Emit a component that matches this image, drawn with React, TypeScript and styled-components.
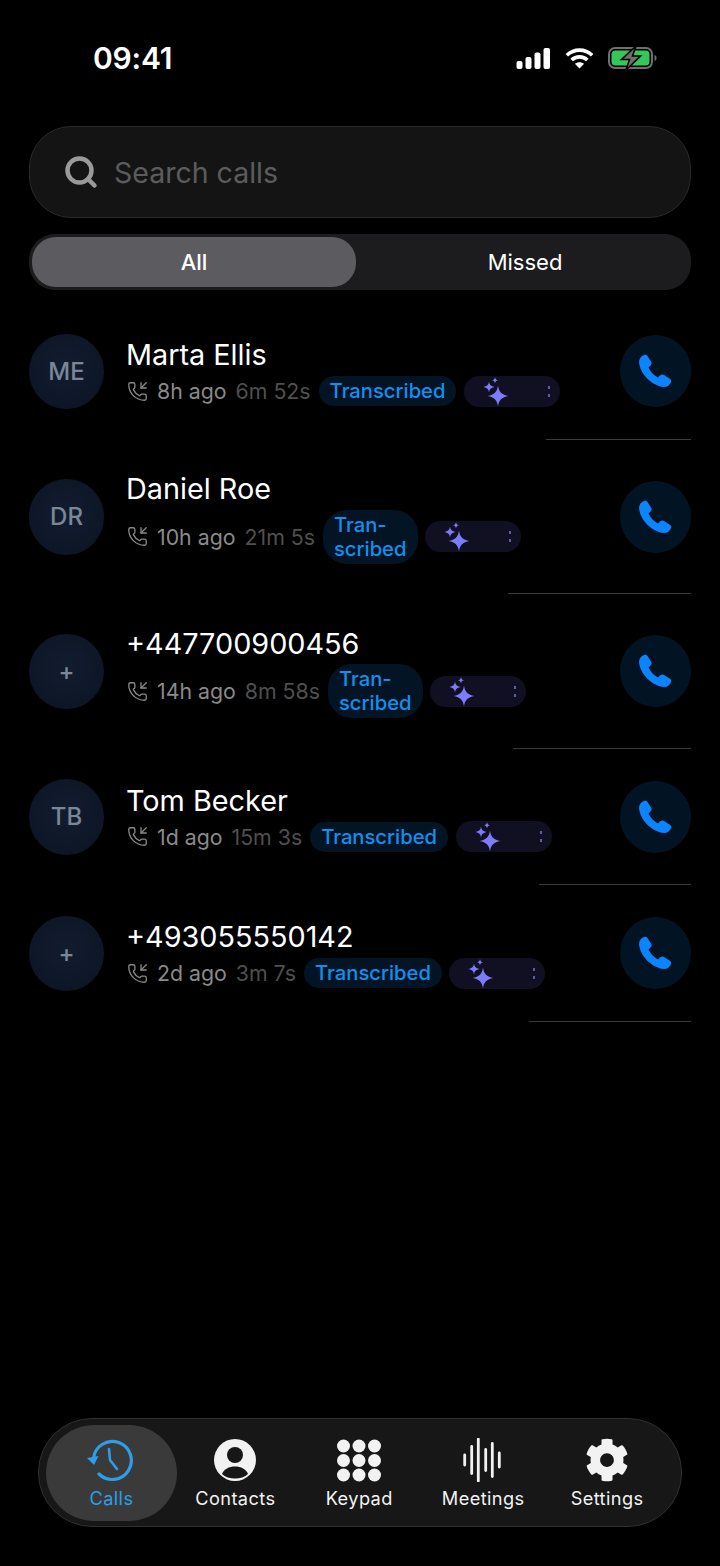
import React from 'react'
import styled, { createGlobalStyle } from 'styled-components'
import { PhoneIncoming, Search } from 'lucide-react'
import { FaCog } from 'react-icons/fa'

const GlobalStyle = createGlobalStyle`
  html, body {
    margin: 0;
    padding: 0;
    background: #000;
  }
  * {
    box-sizing: border-box;
  }
`

const Screen = styled.div`
  width: 720px;
  height: 1566px;
  background: #000;
  color: #fff;
  font-family: Inter, "Liberation Sans", sans-serif;
  display: flex;
  flex-direction: column;
  overflow: hidden;
`

const StatusBar = styled.div`
  height: 116px;
  padding: 0 63px 0 93px;
  display: flex;
  align-items: center;
  justify-content: space-between;
`

const Clock = styled.div`
  font-size: 30px;
  font-weight: 600;
  letter-spacing: -0.2px;
`

const StatusIcons = styled.div`
  display: flex;
  align-items: center;
  gap: 14px;
`

const Content = styled.div`
  padding: 10px 29px 0;
  flex: 1;
  display: flex;
  flex-direction: column;
`

const SearchBox = styled.div`
  height: 92px;
  border-radius: 42px;
  background: #141415;
  border: 1.5px solid #2a2a2b;
  display: flex;
  align-items: center;
  gap: 15px;
  padding-left: 33px;
  color: #9a9a9a;
`

const SearchText = styled.div`
  font-size: 28.5px;
  color: #5c5c5c;
`

const Segments = styled.div`
  margin-top: 16px;
  height: 56px;
  padding: 3px;
  border-radius: 26px;
  background: #1c1c1e;
  display: flex;
  gap: 6px;
`

const Segment = styled.div<{ $active?: boolean }>`
  width: ${p => (p.$active ? '324px' : 'auto')};
  flex: ${p => (p.$active ? '0 0 auto' : '1')};
  border-radius: 24px;
  background: ${p => (p.$active ? '#5c5c60' : 'transparent')};
  display: flex;
  align-items: center;
  justify-content: center;
  font-size: 22px;
  font-weight: ${p => (p.$active ? 500 : 400)};
`

const CallList = styled.div`
  margin-top: 13px;
`

const Row = styled.div`
  padding: 30.5px 0 29.5px;
  display: flex;
  align-items: center;
  gap: 22px;
`

const Avatar = styled.div`
  flex: 0 0 auto;
  width: 75px;
  height: 75.5px;
  border-radius: 50%;
  background: radial-gradient(circle at 50% 45%, #121c30, #0c1422);
  color: #7b8797;
  font-size: 24px;
  font-weight: 500;
  display: flex;
  align-items: center;
  justify-content: center;
`

const CallInfo = styled.div`
  flex: 1;
  display: flex;
  flex-direction: column;
  min-width: 0;
`

const Name = styled.div`
  padding-top: 1px;
  font-size: 28.8px;
  line-height: 36px;
  font-weight: 400;
`

const Meta = styled.div`
  margin-top: 2.5px;
  padding-left: 1px;
  display: flex;
  align-items: center;
  color: #8a8a8a;
`

const When = styled.span`
  margin-left: 9px;
  font-size: 21.3px;
  white-space: nowrap;
`

const Duration = styled.span`
  margin-left: 9px;
  font-size: 21.3px;
  color: #4f4f4f;
  white-space: nowrap;
`

const TranscribedChip = styled.div`
  margin-left: 8px;
  padding: 3px 11px;
  border-radius: 16px;
  background: #031524;
  color: #1290ee;
  font-size: 20.2px;
  line-height: 24px;
  font-weight: 500;
  white-space: nowrap;
`

const WrappedChip = styled(TranscribedChip)`
  border-radius: 24px;
  width: 95px;
`

const AiChip = styled.div`
  position: relative;
  margin-left: 7.5px;
  width: 96px;
  height: 31px;
  border-radius: 15.5px;
  background: #110f22;
  display: flex;
  align-items: center;
  padding-left: 15px;
`

const AiDots = styled.div`
  position: absolute;
  right: 10px;
  top: 10px;
  width: 2px;
  height: 11px;
  border-top: 3px solid #5e5ca8;
  border-bottom: 3px solid #5e5ca8;
`

const CallButton = styled.div`
  flex: 0 0 auto;
  width: 71.5px;
  height: 72px;
  border-radius: 50%;
  background: #021423;
  color: #0a84ff;
  display: flex;
  align-items: center;
  justify-content: center;
`

const Divider = styled.div<{ $inset: number }>`
  height: 1px;
  margin-left: ${p => p.$inset}px;
  background: #3a3a3c;
`

const TabBar = styled.nav`
  margin: 0 38px 39px;
  height: 109px;
  border-radius: 54px;
  background: #171717;
  border: 1.5px solid #303030;
  padding: 5.5px 12px 5.5px 10.5px;
  display: flex;
`

const Tab = styled.div<{ $active?: boolean }>`
  width: ${p => (p.$active ? '132px' : '124px')};
  margin: ${p => (p.$active ? '0 -4px' : '0')};
  border-radius: 48px;
  background: ${p => (p.$active ? '#3a3a3a' : 'transparent')};
  color: ${p => (p.$active ? '#2b9fea' : '#f2f2f2')};
  display: flex;
  flex-direction: column;
  align-items: center;
  padding-top: 13px;
`

const TabIcon = styled.div`
  height: 44px;
  display: flex;
  align-items: center;
  justify-content: center;
`

const TabLabel = styled.div`
  margin-top: 4px;
  font-size: 18.2px;
  line-height: 24px;
  font-weight: 400;
  letter-spacing: 0.4px;
`

const SignalIcon = () => (
  <svg width="35" height="21" viewBox="0 0 35 21" fill="#fff">
    <rect x="0.5" y="13" width="6" height="8" rx="2" />
    <rect x="9.5" y="9" width="6" height="12" rx="2" />
    <rect x="18.5" y="4.5" width="6" height="16.5" rx="2" />
    <rect x="27.5" y="0" width="6.5" height="21" rx="2" />
  </svg>
)

const WifiIcon = () => (
  <svg width="29" height="21" viewBox="0 0 29 21" fill="none" stroke="#fff" strokeWidth="3.6">
    <path d="M1.8 7.200C9 0.400 20 0.400 27.200 7.200" />
    <path d="M6.600 12C11 7.800 18 7.800 22.400 12" />
    <path d="M14.500 20.600L9.900 15.800C12.400 13.600 16.600 13.600 19.100 15.800Z" fill="#fff" stroke="none" />
  </svg>
)

const BatteryIcon = () => (
  <svg width="49" height="24" viewBox="0 0 49 24">
    <rect x="1" y="2" width="43" height="20" rx="6" fill="none" stroke="#6f6f6f" strokeWidth="2" />
    <rect x="3.500" y="4.500" width="38" height="15" rx="4" fill="#35c759" />
    <path d="M46.500 9c1.600.5 2 1.700 2 3s-.4 2.500-2 3z" fill="#6f6f6f" />
    <path d="M28 0L13.500 13.500h8L18 24 32.500 10h-8z" fill="#6f6f6f" stroke="#000" strokeWidth="1.600" />
  </svg>
)

const Sparkles = () => (
  <svg width="30" height="31" viewBox="0 0 30 31" fill="#7c7cf8">
    <path d="M19 9.500c.9 6.300 3.700 9.300 10.500 10.500-6.800 1.200-9.600 4.200-10.500 10.500-.9-6.300-3.700-9.300-10.500-10.500 6.800-1.200 9.600-4.200 10.500-10.500z" />
    <path d="M10 5.500c.4 3.300 1.900 4.900 5.500 5.500-3.600.6-5.100 2.200-5.500 5.500-.4-3.300-1.900-4.900-5.500-5.500 3.600-.6 5.100-2.200 5.500-5.500z" />
    <path d="M16 1c.2 2 1.200 3 3.300 3.300-2.100.3-3.100 1.300-3.300 3.300-.2-2-1.200-3-3.300-3.300 2.100-.3 3.100-1.300 3.300-3.300z" />
  </svg>
)

const PhoneGlyph = () => (
  <svg width="34" height="34" viewBox="0 0 34 34" fill="currentColor">
    <path d="M6 1C3 2 1 5 1 8c1 12 13 24 25 25 3 0 6-2 7-5 .5-1.500 0-2.500-1.500-3.500L26 21c-1.500-1-3-.5-4 .5l-2 2c-4.500-2.500-7.500-5.500-9.500-10l2-2c1-1 1.500-2.500.5-4L9.500 2C8.500.5 7.500.5 6 1z" />
  </svg>
)

const HistoryIcon = () => (
  <svg width="48" height="44" viewBox="0 0 48 44" fill="none" stroke="currentColor" strokeWidth="3.200" strokeLinecap="round" strokeLinejoin="round">
    <path d="M6.500 20A19 19 0 1 1 12 36" />
    <path d="M22 11l1 11 7 9" strokeWidth="2.600" />
    <path d="M0 20L11.500 18L7 27Z" fill="currentColor" stroke="none" />
  </svg>
)

const ContactIcon = () => (
  <svg width="44" height="44" viewBox="0 0 44 44">
    <circle cx="22" cy="22" r="21" fill="#f2f2f2" />
    <circle cx="22" cy="17" r="8" fill="#171717" />
    <path d="M9 36c2-5 7-7.500 13-7.500S33 31 35 36c-3 3-8 4.500-13 4.500S12 39 9 36z" fill="#171717" />
  </svg>
)

const KeypadIcon = () => (
  <svg width="46" height="44" viewBox="0 0 46 44" fill="currentColor">
    {[8, 22.500, 37].map(y =>
      [7.500, 23, 38.500].map(x => <circle key={`${x}-${y}`} cx={x} cy={y} r="6.500" />)
    )}
  </svg>
)

const WaveIcon = () => (
  <svg width="40" height="44" viewBox="0 0 40 44" stroke="currentColor" strokeWidth="2.800" strokeLinecap="round">
    <path d="M1.700 17v10M8.700 8.500v27M15.300 1v42M22.700 11.500v21M29.300 5.500v33M36.300 15v14" />
  </svg>
)

interface Call {
  initials: string
  name: string
  when: string
  duration: string
  wrapped?: boolean
  inset: number
}

const calls: Call[] = [
  { initials: 'ME', name: 'Marta Ellis', when: '8h ago', duration: '6m 52s', inset: 517 },
  { initials: 'DR', name: 'Daniel Roe', when: '10h ago', duration: '21m 5s', wrapped: true, inset: 479 },
  { initials: '+', name: '+447700900456', when: '14h ago', duration: '8m 58s', wrapped: true, inset: 484 },
  { initials: 'TB', name: 'Tom Becker', when: '1d ago', duration: '15m 3s', inset: 510 },
  { initials: '+', name: '+493055550142', when: '2d ago', duration: '3m 7s', inset: 500 },
]

const tabs = [
  { label: 'Calls', icon: <HistoryIcon />, active: true },
  { label: 'Contacts', icon: <ContactIcon /> },
  { label: 'Keypad', icon: <KeypadIcon /> },
  { label: 'Meetings', icon: <WaveIcon /> },
  { label: 'Settings', icon: <FaCog size={44} /> },
]

const App = () => (
  <Screen>
    <GlobalStyle />
    <StatusBar>
      <Clock>09:41</Clock>
      <StatusIcons>
        <SignalIcon />
        <WifiIcon />
        <BatteryIcon />
      </StatusIcons>
    </StatusBar>
    <Content>
      <SearchBox>
        <Search size={36} strokeWidth={3} />
        <SearchText>Search calls</SearchText>
      </SearchBox>
      <Segments>
        <Segment $active>All</Segment>
        <Segment>Missed</Segment>
      </Segments>
      <CallList>
        {calls.map(call => (
          <div key={call.name}>
            <Row>
              <Avatar>{call.initials}</Avatar>
              <CallInfo>
                <Name>{call.name}</Name>
                <Meta>
                  <PhoneIncoming size={21} strokeWidth={1.5} />
                  <When>{call.when}</When>
                  <Duration>{call.duration}</Duration>
                  {call.wrapped ? (
                    <WrappedChip>Tran-<br />scribed</WrappedChip>
                  ) : (
                    <TranscribedChip>Transcribed</TranscribedChip>
                  )}
                  <AiChip>
                    <Sparkles />
                    <AiDots />
                  </AiChip>
                </Meta>
              </CallInfo>
              <CallButton>
                <PhoneGlyph />
              </CallButton>
            </Row>
            <Divider $inset={call.inset} />
          </div>
        ))}
      </CallList>
    </Content>
    <TabBar>
      {tabs.map(tab => (
        <Tab key={tab.label} $active={tab.active}>
          <TabIcon>{tab.icon}</TabIcon>
          <TabLabel>{tab.label}</TabLabel>
        </Tab>
      ))}
    </TabBar>
  </Screen>
)

export default App
